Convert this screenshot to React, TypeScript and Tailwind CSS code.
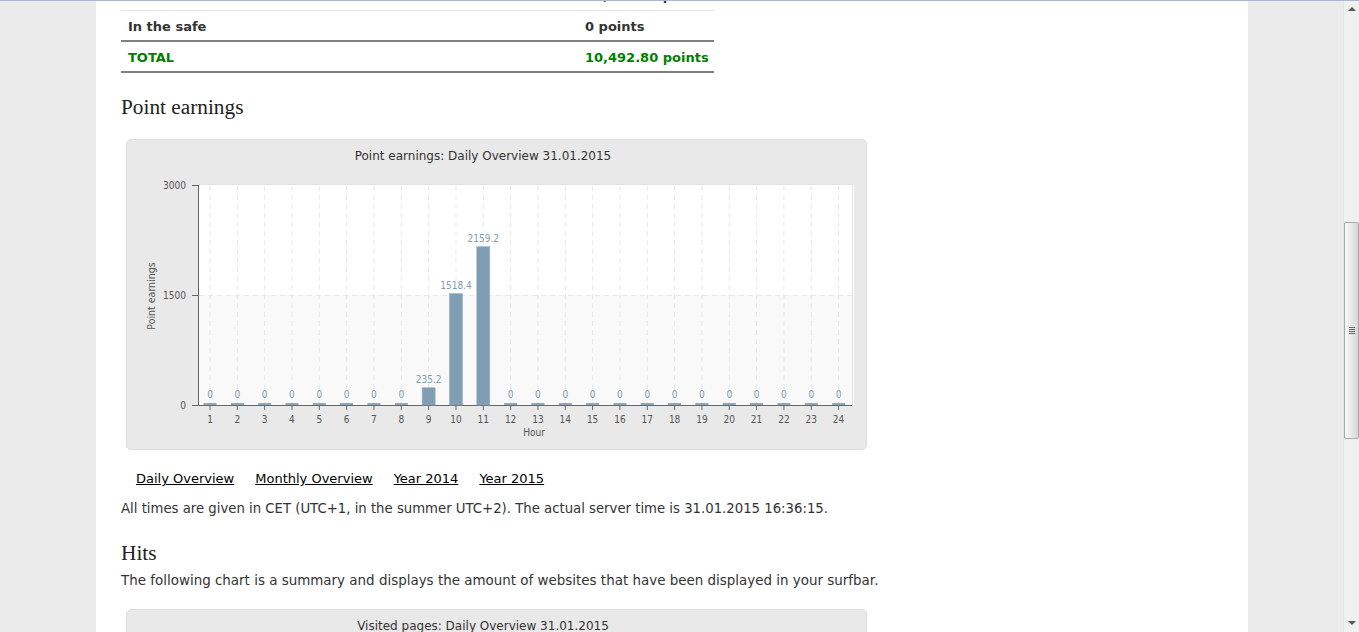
import React from "react";

const F = "'DejaVu Sans Condensed','DejaVu Sans',sans-serif";
const FT = "'DejaVu Sans',sans-serif";

function Chart({ title, values }: { title: string; values: number[] }) {
  const c = (i: number) => 83 + i * 27.33;
  const y0 = 265;
  const h = 220;
  const max = 3000;
  return (
    <div className="ml-[5px] w-[741px] h-[311px] rounded-[5px] border border-[#dedede] bg-[#e9e9e9] shrink-0">
      <svg width="740" height="310" className="block" style={{ fontFamily: F }}>
        <text x="356" y="20" textAnchor="middle" fontSize="12" fill="#333" style={{ fontFamily: FT }}>
          {title}
        </text>
        <rect x="71" y="45" width="654" height="110" fill="#ffffff" />
        <rect x="71" y="155" width="654" height="110" fill="#f9f9f9" />
        <rect x="71.5" y="44.5" width="654" height="221" fill="none" stroke="#e2e2e2" />
        <rect x="726" y="45" width="1" height="220" fill="#ffffff" />
        {values.map((_, i) => (
          <line key={"g" + i} x1={c(i)} x2={c(i)} y1="46" y2="264" stroke="#e8e8e8" strokeDasharray="5 4" />
        ))}
        <line x1="72" x2="725" y1="155.5" y2="155.5" stroke="#e8e8e8" strokeDasharray="5 4" />
        <line x1="71.5" x2="71.5" y1="45" y2="265" stroke="#666" />
        <line x1="65" x2="725" y1="265.5" y2="265.5" stroke="#666" />
        {[45, 155, 265].map((y, k) => (
          <g key={"yt" + k}>
            <line x1="65" x2="71" y1={y + 0.5} y2={y + 0.5} stroke="#666" />
            <text x="59" y={y + 4} textAnchor="end" fontSize="10" fill="#555">
              {["3000", "1500", "0"][k]}
            </text>
          </g>
        ))}
        <text
          x="0"
          y="0"
          transform="translate(28 156) rotate(-90)"
          textAnchor="middle"
          fontSize="10.5"
          fill="#555"
        >
          Point earnings
        </text>
        {values.map((v, i) => {
          const bh = Math.max(2, (v / max) * h);
          const top = y0 - bh;
          return (
            <g key={"b" + i}>
              <rect
                x={c(i) - 6.5}
                y={top}
                width="13"
                height={bh}
                fill={v > 0 ? "#7f9db3" : "#8fa7ba"}
                stroke={v > 0 ? "#9bb2c3" : "none"}
                strokeWidth="0.6"
              />
              <text x={c(i)} y={top - 5} textAnchor="middle" fontSize="10" fill="#7f9db3">
                {v === 0 ? "0" : v.toFixed(1)}
              </text>
              <line x1={c(i)} x2={c(i)} y1="265" y2="270" stroke="#666" />
              <text x={c(i)} y="283" textAnchor="middle" fontSize="10" fill="#555">
                {i + 1}
              </text>
            </g>
          );
        })}
        <text x="407" y="296" textAnchor="middle" fontSize="10" fill="#555">
          Hour
        </text>
      </svg>
    </div>
  );
}

export default function App() {
  const earnings = Array.from({ length: 24 }, () => 0);
  earnings[8] = 235.2;
  earnings[9] = 1518.4;
  earnings[10] = 2159.2;
  const hits = Array.from({ length: 24 }, () => 0);

  return (
    <div className="relative w-[1359px] h-[632px] overflow-hidden flex bg-[#ebebeb]">
      <div className="absolute top-0 left-0 right-0 h-px bg-[#a7b9cf] z-10" />
      <div className="flex-1 flex">
        <div className="ml-[96px] w-[1152px] h-full bg-white pl-[25px] font-['DejaVu_Sans',sans-serif] text-[13px] text-[#333]">
          <div className="w-[593px] mt-[-20px]">
            <div className="flex h-[31px] pt-px items-center border-b border-[#e6e6e6] font-bold text-[#333]">
              <div className="w-[464px] pl-[7px]">Balance</div>
              <div>10,492.80 points</div>
            </div>
            <div className="flex h-[31px] pt-[2px] items-center border-b-2 border-[#808080] font-bold text-[#333]">
              <div className="w-[464px] pl-[7px]">In the safe</div>
              <div>0 points</div>
            </div>
            <div className="flex h-[31px] pt-[2px] items-center border-b-2 border-[#808080] font-bold text-[#008000]">
              <div className="w-[464px] pl-[7px]">TOTAL</div>
              <div>10,492.80 points</div>
            </div>
          </div>
          <h2 className="mt-[19px] h-[30px] leading-[30px] font-['Liberation_Serif',serif] text-[21.3px] text-[#222]">
            Point earnings
          </h2>
          <div className="mt-[17px]">
            <Chart title="Point earnings: Daily Overview 31.01.2015" values={earnings} />
          </div>
          <div className="mt-[20px] h-[18px] leading-[18px] pl-[15px] flex gap-[21px] text-black">
            <span className="underline">Daily Overview</span>
            <span className="underline">Monthly Overview</span>
            <span className="underline">Year 2014</span>
            <span className="underline">Year 2015</span>
          </div>
          <p className="mt-[12px] h-[18px] leading-[18px] text-[13.25px]">
            All times are given in CET (UTC+1, in the summer UTC+2). The actual server time is 31.01.2015 16:36:15.
          </p>
          <h2 className="mt-[20px] h-[30px] leading-[30px] font-['Liberation_Serif',serif] text-[21.3px] text-[#222]">
            Hits
          </h2>
          <p className="mt-[4px] h-[18px] leading-[18px] text-[13.45px]">
            The following chart is a summary and displays the amount of websites that have been displayed in your surfbar.
          </p>
          <div className="mt-[19px]">
            <Chart title="Visited pages: Daily Overview 31.01.2015" values={hits} />
          </div>
        </div>
      </div>
      <div className="w-[16px] h-full bg-[#f0f0f0] border-l border-[#e4e4e4] flex flex-col items-center relative">
        <div className="mt-[7px] w-0 h-0 border-l-[4px] border-r-[4px] border-b-[4px] border-l-transparent border-r-transparent border-b-[#555]" />
        <div className="absolute top-[222px] left-[0px] w-[15px] h-[217px] rounded-[2px] border border-[#a9a9a9] bg-gradient-to-r from-[#fafafa] to-[#d6d6d6] flex items-center justify-center">
          <div className="flex flex-col gap-[1px]">
            <div className="w-[6px] h-px bg-[#666]" />
            <div className="w-[6px] h-px bg-[#666]" />
            <div className="w-[6px] h-px bg-[#666]" />
            <div className="w-[6px] h-px bg-[#666]" />
          </div>
        </div>
        <div className="absolute bottom-[7px] w-0 h-0 border-l-[4px] border-r-[4px] border-t-[4px] border-l-transparent border-r-transparent border-t-[#555]" />
      </div>
    </div>
  );
}
